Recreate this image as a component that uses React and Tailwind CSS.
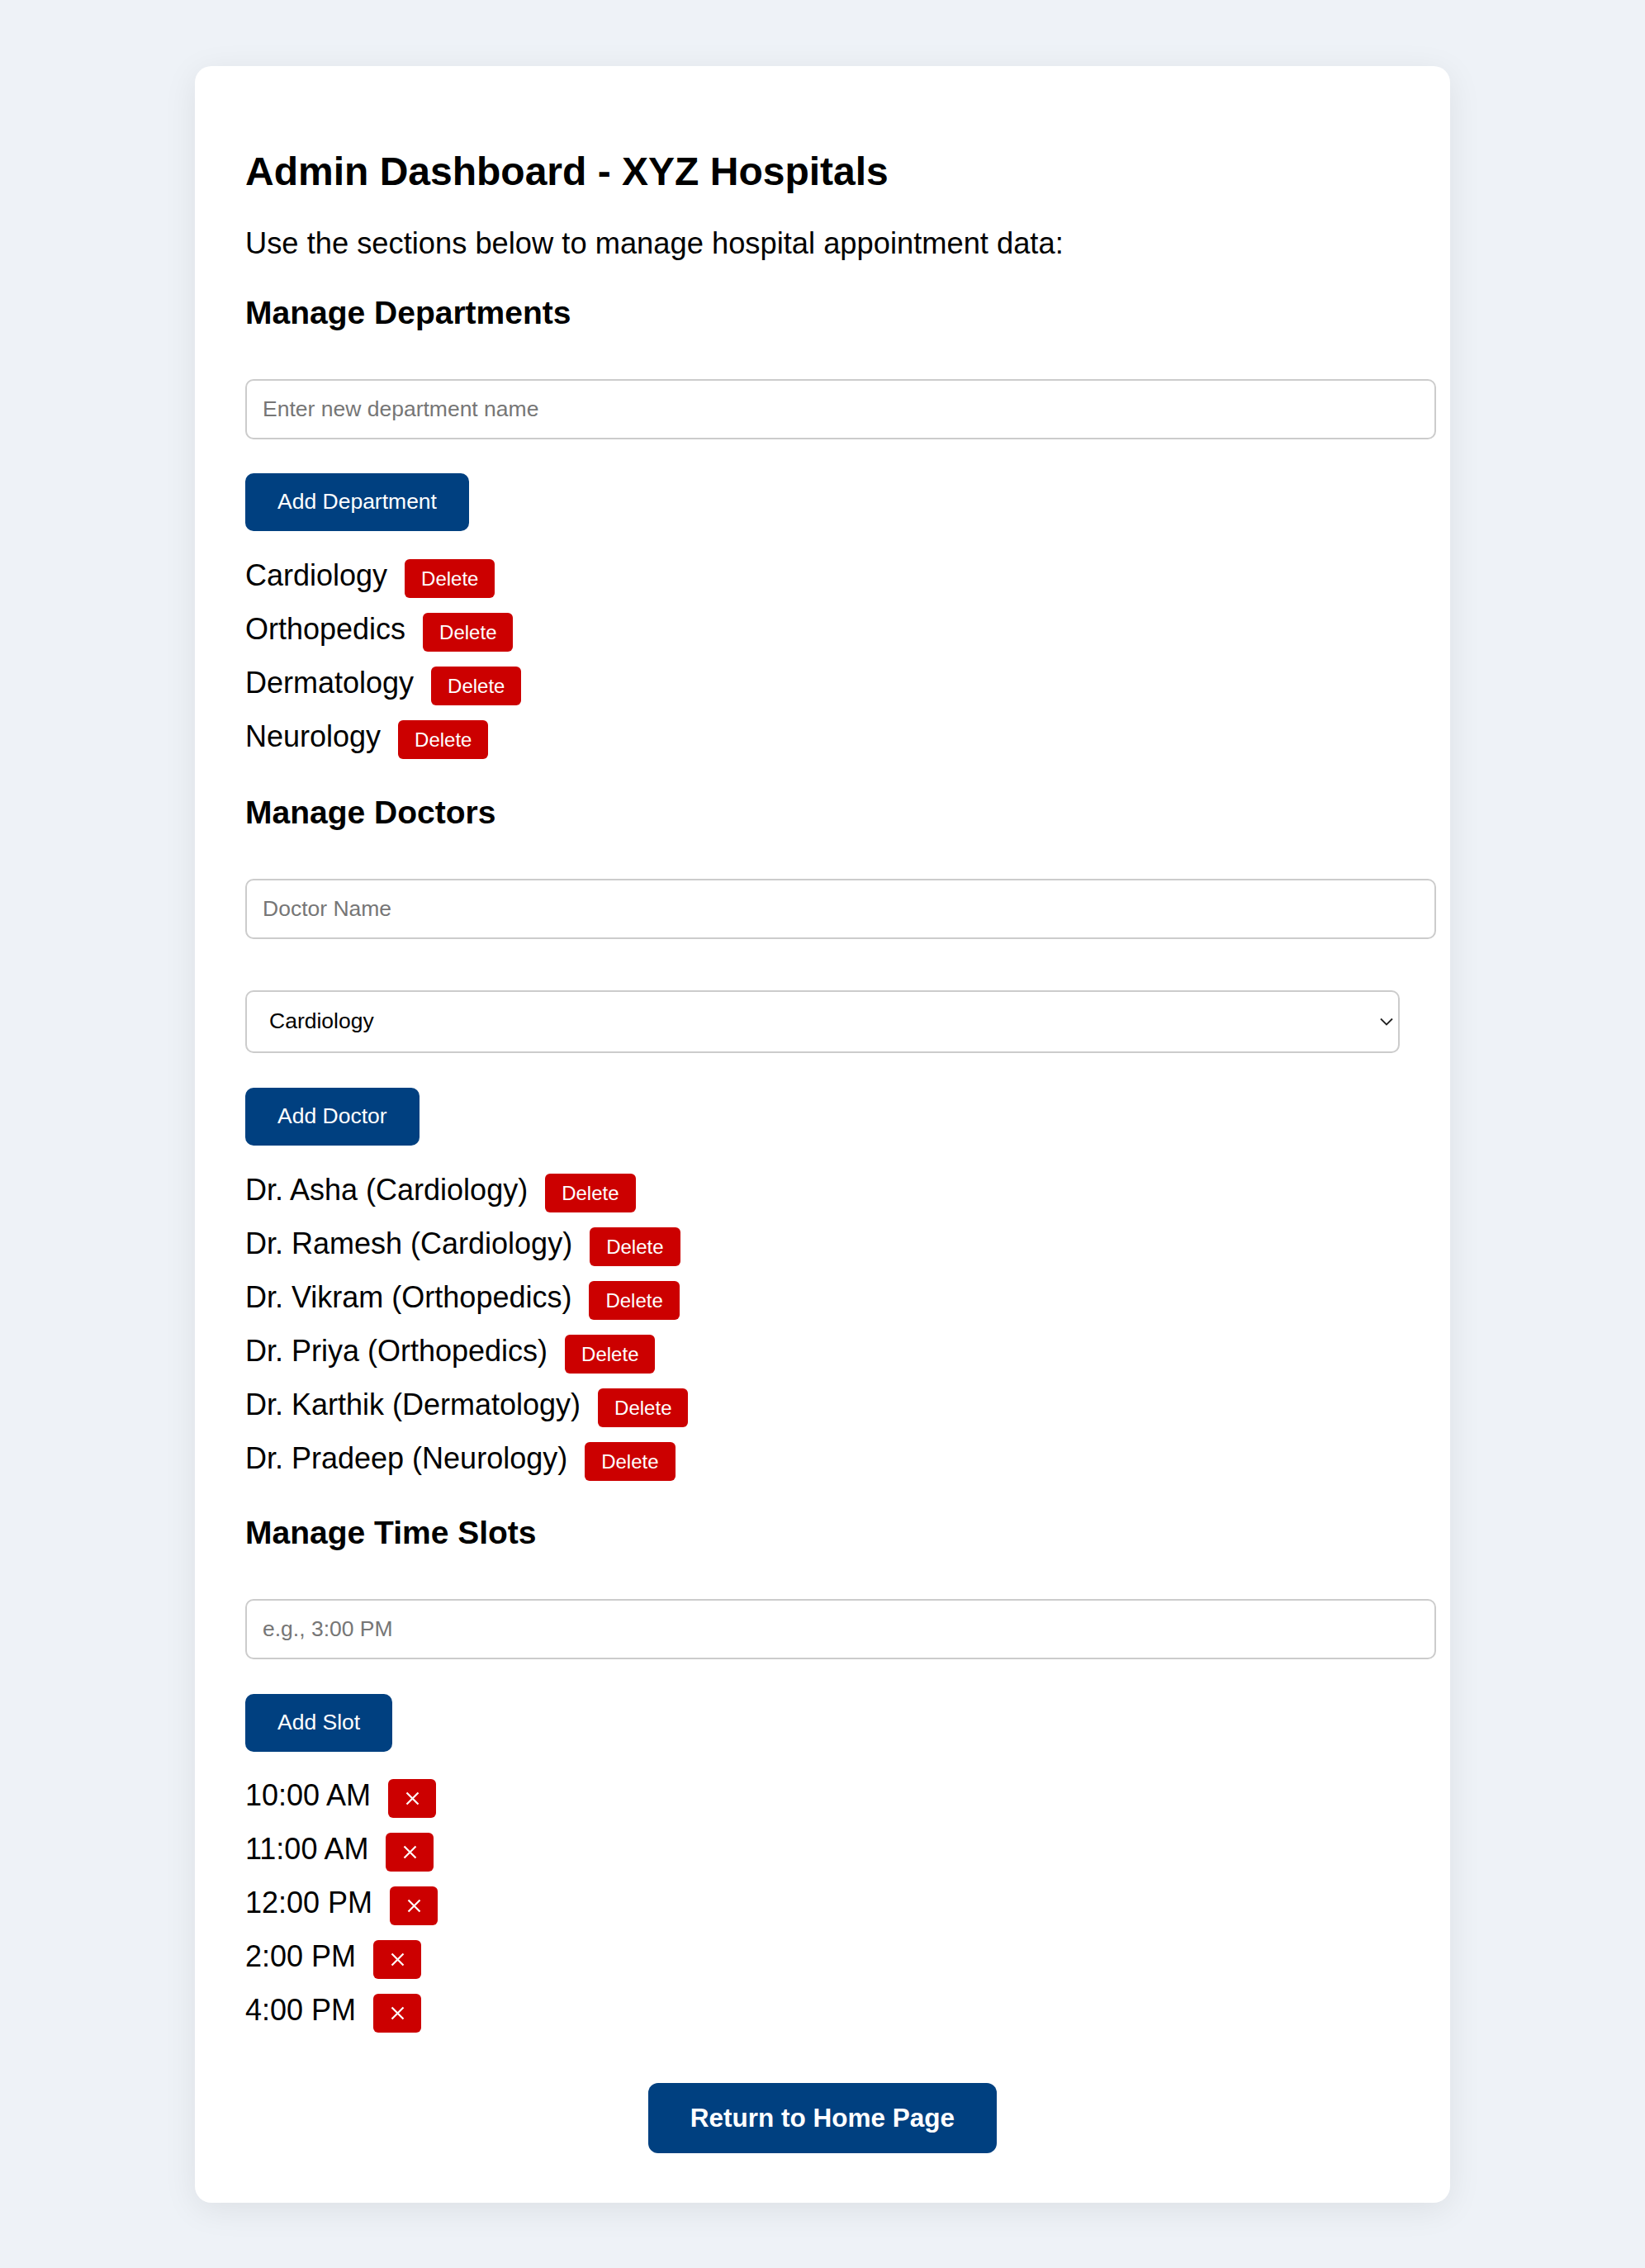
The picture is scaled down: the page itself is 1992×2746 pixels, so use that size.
import { useState } from "react";

const departments = ["Cardiology", "Orthopedics", "Dermatology", "Neurology"];

const doctors = [
  "Dr. Asha (Cardiology)",
  "Dr. Ramesh (Cardiology)",
  "Dr. Vikram (Orthopedics)",
  "Dr. Priya (Orthopedics)",
  "Dr. Karthik (Dermatology)",
  "Dr. Pradeep (Neurology)",
];

const slots = ["10:00 AM", "11:00 AM", "12:00 PM", "2:00 PM", "4:00 PM"];

const inputCls =
  "block w-[calc(100%+44px)] h-[73px] border-2 border-[#cccccc] rounded-[10px] px-[19px] text-[26.5px] text-black placeholder:text-[#767676] outline-none bg-white";

const primaryBtn =
  "h-[70px] px-[39px] bg-[#004080] text-white text-[26.5px] rounded-[10px] self-start";

const Row = ({ label, children }) => (
  <li className="flex items-start gap-[21px]">
    <span className="text-[36px] leading-[40px] text-black">{label}</span>
    {children}
  </li>
);

const DeleteBtn = () => (
  <button className="bg-[#cc0000] text-white text-[24px] leading-[27px] px-[20px] py-[10px] rounded-[6px]">
    Delete
  </button>
);

const XBtn = () => (
  <button className="bg-[#cc0000] w-[58px] h-[47px] rounded-[6px] flex items-center justify-center">
    <svg width="17" height="17" viewBox="0 0 17 17" className="block">
      <path d="M1.5 1.5 L15.5 15.5 M15.5 1.5 L1.5 15.5" stroke="white" strokeWidth="2.2" />
    </svg>
  </button>
);

const Heading = ({ children, className }) => (
  <h3 className={`text-[39px] leading-[45px] font-bold text-black ${className}`}>{children}</h3>
);

const App = () => {
  const [dept, setDept] = useState("Cardiology");

  return (
    <div className="min-h-screen bg-[#eef2f7] py-[80px] font-['Liberation_Sans',Arial,Helvetica,sans-serif]">
      <div className="w-[1520px] mx-auto bg-white rounded-[20px] shadow-[0_8px_40px_rgba(0,0,0,0.08)] px-[61px] pt-[100px] pb-[60px] flex flex-col">
        <h2 className="text-[48px] leading-[56px] font-bold text-black">Admin Dashboard - XYZ Hospitals</h2>
        <p className="mt-[39px] text-[36.3px] leading-[40px] text-black">
          Use the sections below to manage hospital appointment data:
        </p>

        {/* departments */}
        <Heading className="mt-[41px]">Manage Departments</Heading>
        <input type="text" placeholder="Enter new department name" className={`mt-[58px] ${inputCls}`} />
        <button className={`mt-[41px] ${primaryBtn}`}>Add Department</button>
        <ul className="mt-[34px] flex flex-col gap-[18px]">
          {departments.map((d) => (
            <Row key={d} label={d}>
              <DeleteBtn />
            </Row>
          ))}
        </ul>

        {/* doctors */}
        <Heading className="mt-[42px]">Manage Doctors</Heading>
        <input type="text" placeholder="Doctor Name" className={`mt-[58px] ${inputCls}`} />
        <div className="relative mt-[62px] w-full">
          <select
            value={dept}
            onChange={(e) => setDept(e.target.value)}
            className="block w-full h-[76px] appearance-none border-2 border-[#cccccc] rounded-[10px] pl-[27px] pr-[50px] text-[26.5px] text-black bg-white outline-none"
          >
            {departments.map((d) => (
              <option key={d}>{d}</option>
            ))}
          </select>
          <svg
            width="16"
            height="10"
            viewBox="0 0 16 10"
            className="absolute right-[8px] top-1/2 -translate-y-1/2 pointer-events-none"
          >
            <path d="M1 1.5 L8 8.5 L15 1.5" fill="none" stroke="#222" strokeWidth="1.8" />
          </svg>
        </div>
        <button className={`mt-[42px] ${primaryBtn}`}>Add Doctor</button>
        <ul className="mt-[34px] flex flex-col gap-[18px]">
          {doctors.map((d) => (
            <Row key={d} label={d}>
              <DeleteBtn />
            </Row>
          ))}
        </ul>

        {/* time slots */}
        <Heading className="mt-[40px]">Manage Time Slots</Heading>
        <input type="text" placeholder="e.g., 3:00 PM" className={`mt-[58px] ${inputCls}`} />
        <button className={`mt-[42px] ${primaryBtn}`}>Add Slot</button>
        <ul className="mt-[33px] flex flex-col gap-[18px]">
          {slots.map((s) => (
            <Row key={s} label={s}>
              <XBtn />
            </Row>
          ))}
        </ul>

        <div className="mt-[61px] flex justify-center">
          <button className="h-[85px] px-[51px] bg-[#004080] text-white text-[31.5px] font-bold rounded-[12px]">
            Return to Home Page
          </button>
        </div>
      </div>
    </div>
  );
};

export default App;
